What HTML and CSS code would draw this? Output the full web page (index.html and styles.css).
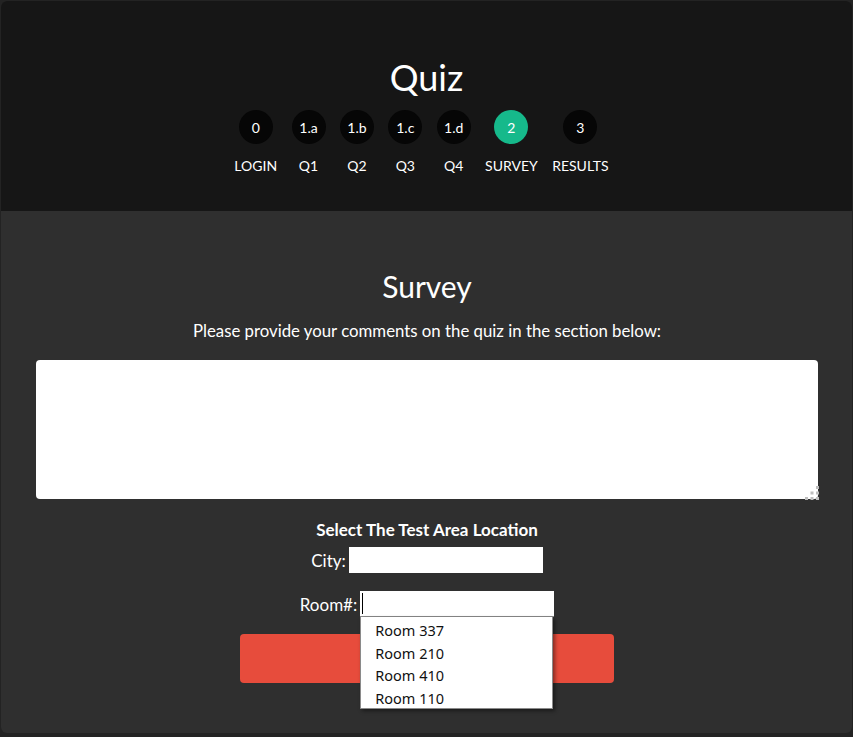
FILE: index.html
```html
<!DOCTYPE html>
<html>
<head>
<meta charset="utf-8">
<link rel="stylesheet" href="styles.css">
</head>
<body>
<div class="card">
  <header class="top">
    <h1 class="title">Quiz</h1>
    <ol class="steps">
      <li class="step"><span class="dot">0</span><span class="label">LOGIN</span></li>
      <li class="step"><span class="dot">1.a</span><span class="label">Q1</span></li>
      <li class="step"><span class="dot">1.b</span><span class="label">Q2</span></li>
      <li class="step"><span class="dot">1.c</span><span class="label">Q3</span></li>
      <li class="step"><span class="dot">1.d</span><span class="label">Q4</span></li>
      <li class="step"><span class="dot active">2</span><span class="label">SURVEY</span></li>
      <li class="step"><span class="dot">3</span><span class="label">RESULTS</span></li>
    </ol>
  </header>
  <main class="content">
    <h2 class="heading">Survey</h2>
    <p class="intro">Please provide your comments on the quiz in the section below:</p>
    <div class="comment">
      <div class="comment-box"></div>
      <svg class="grip" width="16" height="16" viewBox="0 0 16 16">
        <rect x="12" y="1" width="3" height="3" fill="#bdbdbd"/>
        <rect x="6.5" y="6.5" width="3" height="3" fill="#bdbdbd"/>
        <rect x="12" y="6.5" width="3" height="3" fill="#bdbdbd"/>
        <rect x="1" y="12" width="3" height="3" fill="#bdbdbd"/>
        <rect x="6.5" y="12" width="3" height="3" fill="#bdbdbd"/>
        <rect x="12" y="12" width="3" height="3" fill="#bdbdbd"/>
      </svg>
    </div>
    <div class="location">Select The Test Area Location</div>
    <div class="field"><span class="field-label">City:</span><span class="input"></span></div>
    <div class="field room"><span class="field-label">Room#:</span>
      <span class="input-wrap">
        <span class="input focused"><span class="caret"></span></span>
        <ul class="options">
          <li>Room 337</li>
          <li>Room 210</li>
          <li>Room 410</li>
          <li>Room 110</li>
        </ul>
      </span>
    </div>
    <div class="submit"></div>
  </main>
</div>
</body>
</html>
```

FILE: styles.css
```css
html, body {
  margin: 0;
  padding: 0;
  background: #232323;
  font-family: Lato, "Open Sans", sans-serif;
  color: #fff;
}
.card {
  margin: 1px 1px 0 1px;
  width: 851px;
  height: 732px;
  border-radius: 6px;
  overflow: hidden;
  background: #2f2f2f;
  display: flex;
  flex-direction: column;
}
.top {
  background: #161616;
  height: 210px;
  box-sizing: border-box;
  padding-top: 55px;
  display: flex;
  flex-direction: column;
  align-items: center;
}
.title {
  margin: 0;
  font-size: 36px;
  font-weight: 400;
  line-height: 43px;
}
.steps {
  list-style: none;
  margin: 11px 0 0 0;
  padding: 0 10px 0 0;
  display: flex;
  gap: 14.4px;
}
.step {
  display: flex;
  flex-direction: column;
  align-items: center;
  min-width: 34px;
}
.dot {
  width: 34px;
  height: 34px;
  border-radius: 50%;
  background: #060606;
  font-size: 14px;
  display: flex;
  align-items: center;
  justify-content: center;
}
.dot.active {
  background: #16b98b;
}
.label {
  margin-top: 14px;
  font-size: 14px;
  line-height: 16px;
}
.content {
  flex: 1;
  padding: 57px 34px 0 35px;
  display: flex;
  flex-direction: column;
  align-items: center;
}
.heading {
  margin: 0;
  font-size: 30px;
  font-weight: 400;
  line-height: 36px;
}
.intro {
  margin: 16px 0 0 0;
  font-size: 16.8px;
  line-height: 21px;
}
.comment {
  position: relative;
  margin-top: 19px;
  width: 100%;
}
.comment-box {
  height: 139px;
  background: #fff;
  border-radius: 4px;
}
.grip {
  position: absolute;
  right: -2px;
  bottom: -2px;
}
.location {
  margin-top: 21px;
  font-size: 17px;
  font-weight: 700;
  line-height: 20px;
}
.field {
  margin-top: 7px;
  display: flex;
  align-items: center;
  gap: 3px;
  font-size: 17px;
}
.field.room {
  margin-top: 18px;
}
.input {
  display: block;
  width: 194px;
  height: 26px;
  background: #fff;
  position: relative;
}
.input.focused {
  box-sizing: border-box;
  border-bottom: 1px solid #8a8a8a;
}
.caret {
  position: absolute;
  left: 2px;
  top: 2px;
  width: 1px;
  height: 21px;
  background: #000;
}
.input-wrap {
  position: relative;
}
.options {
  position: absolute;
  left: 0;
  top: 26px;
  width: 193px;
  box-sizing: border-box;
  margin: 0;
  padding: 2px 0 0 0;
  list-style: none;
  background: #fff;
  border: 1px solid #8a8a8a;
  border-top: none;
  box-shadow: 2px 2px 4px rgba(0, 0, 0, 0.45);
  z-index: 2;
  height: 92px;
  overflow: hidden;
}
.options li {
  font-family: "Noto Sans", "Open Sans", sans-serif;
  font-size: 14.5px;
  line-height: 22.5px;
  color: #111;
  padding-left: 14px;
}
.submit {
  margin-top: 17px;
  width: 374px;
  height: 49px;
  background: #e74c3c;
  border-radius: 4px;
}
```
